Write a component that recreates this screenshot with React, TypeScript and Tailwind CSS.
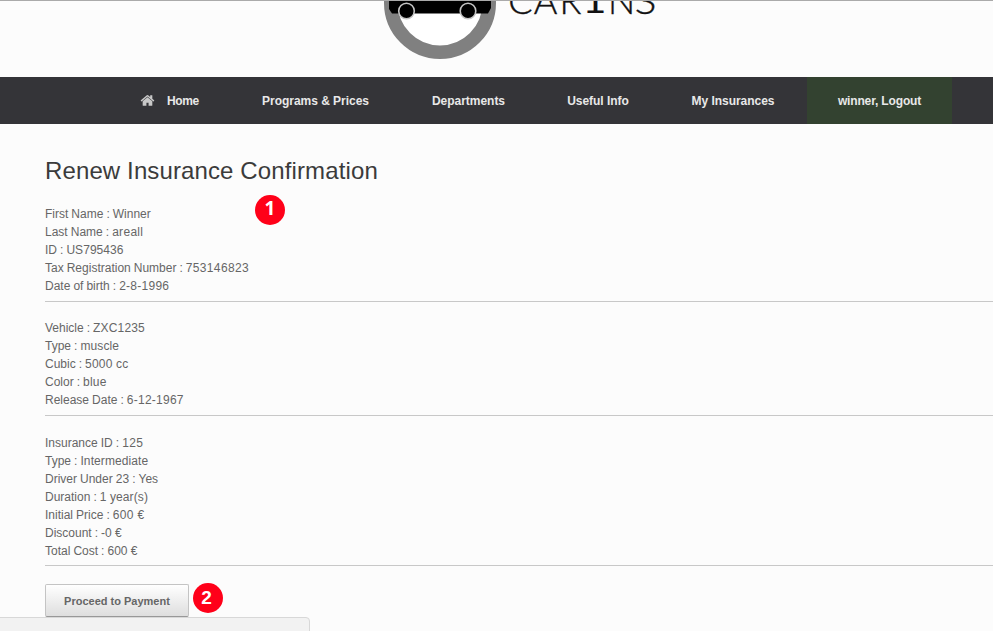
type Row = { label: string; value: string; tracking?: string };

const digits = "tracking-[0.33px]";

const groups: { rows: Row[]; size: string }[] = [
  {
    rows: [
      { label: "First Name", value: "Winner" },
      { label: "Last Name", value: "areall", tracking: "tracking-[0.3px]" },
      { label: "ID", value: "US795436", tracking: "tracking-[0.05px]" },
      { label: "Tax Registration Number", value: "753146823", tracking: digits },
      { label: "Date of birth", value: "2-8-1996", tracking: "tracking-[0.25px]" },
    ],
    size: "h-[97px]",
  },
  {
    rows: [
      { label: "Vehicle", value: "ZXC1235", tracking: "tracking-[0.15px]" },
      { label: "Type", value: "muscle", tracking: "tracking-[0.1px]" },
      { label: "Cubic", value: "5000 cc", tracking: "tracking-[0.2px]" },
      { label: "Color", value: "blue", tracking: "tracking-[0.2px]" },
      { label: "Release Date", value: "6-12-1967", tracking: "tracking-[0.25px]" },
    ],
    size: "h-[97px]",
  },
  {
    rows: [
      { label: "Insurance ID", value: "125", tracking: digits },
      { label: "Type", value: "Intermediate", tracking: "tracking-[0.1px]" },
      { label: "Driver Under 23", value: "Yes" },
      { label: "Duration", value: "1 year(s)", tracking: "tracking-[0.1px]" },
      { label: "Initial Price", value: "600 €", tracking: digits },
      { label: "Discount", value: "-0 €" },
      { label: "Total Cost", value: "600 €" },
    ],
    size: "pt-px h-[133px]",
  },
];

const navItems = [
  { text: "Programs & Prices", width: "w-[171px]" },
  { text: "Departments", width: "w-[135px]" },
  { text: "Useful Info", width: "w-[124px]" },
  { text: "My Insurances", width: "w-[146px]" },
];

function HomeIcon() {
  return (
    <svg viewBox="0 0 1792 1792" className="mr-[12px] size-[15px] shrink-0" fill="#c8c8c8">
      <path d="M1472 992v480q0 26-19 45t-45 19h-384v-384h-256v384h-384q-26 0-45-19t-19-45v-480q0-1 .5-3t.5-3l575-474 575 474q1 2 1 6zm223-69l-62 74q-8 9-21 11h-3q-13 0-21-7l-692-577-692 577q-12 8-24 7-13-2-21-11l-62-74q-8-10-7-23.5t11-21.5l719-599q32-26 76-26t76 26l244 204v-195q0-14 9-23t23-9h192q14 0 23 9t9 23v408l219 182q10 8 11 21.5t-7 23.5z" />
    </svg>
  );
}

function Logo() {
  return (
    <div className="flex h-[76px] overflow-hidden pl-[384px]">
      <svg width="112" height="60" viewBox="384 1 112 60" className="shrink-0">
        <circle cx="440" cy="3" r="49.2" fill="#fff" stroke="#808080" strokeWidth="13.6" />
        <path d="M389 0H491V8L488 13.5H392L389 9Z" fill="#000" />
        <circle cx="406.5" cy="11" r="7.8" fill="#000" stroke="#c4c4c4" strokeWidth="1.6" />
        <circle cx="468" cy="11" r="7.8" fill="#000" stroke="#c4c4c4" strokeWidth="1.6" />
      </svg>
      <div className="-mt-[25px] ml-[12px] flex h-[48px] font-['Lato',sans-serif] text-[36px] font-light leading-[48px] text-[#111] [-webkit-text-stroke:0.4px_#111]">
        <span className="w-[25px] text-center">C</span>
        <span className="w-[25px] text-center">A</span>
        <span className="w-[25px] text-center">R</span>
        <span className="w-[25px] scale-x-[1.25] text-center font-['Liberation_Mono',monospace] text-[32px] leading-[58px] [-webkit-text-stroke:0px]">
          I
        </span>
        <span className="w-[25px] text-center">N</span>
        <span className="w-[25px] scale-x-[1.12] text-center">S</span>
      </div>
    </div>
  );
}

export default function App() {
  return (
    <div className="relative h-[631px] w-[993px] overflow-hidden border-t border-[#aaaaaa] bg-[#fcfcfc] font-['Liberation_Sans',Arial,sans-serif]">
      <Logo />
      <nav className="flex h-[47px] items-stretch bg-[#343438] pl-[109px] text-[12px] font-bold text-[#e8e8e8]">
        <a className="flex w-[121px] items-center pl-[31px] tracking-[-0.4px]">
          <HomeIcon />
          Home
        </a>
        {navItems.map((item) => (
          <a key={item.text} className={`flex items-center justify-center whitespace-nowrap tracking-[-0.03px] ${item.width}`}>
            {item.text}
          </a>
        ))}
        <a className="ml-px flex w-[145px] items-center justify-center bg-[#334230] tracking-[-0.15px]">
          winner, Logout
        </a>
      </nav>
      <main className="pl-[45px] pt-[31px] text-[12px] leading-[18px] text-[#666]">
        <h1 className="h-[50px] text-[24px] leading-[32px] tracking-[0.12px] text-[#3b3b3b]">
          Renew Insurance Confirmation
        </h1>
        {groups.map((group) => (
          <section key={group.rows[0].label} className={`mb-[17px] border-b border-[#c8c8c8] ${group.size}`}>
            {group.rows.map((row) => (
              <p key={row.label} className="whitespace-nowrap">
                <span className="[word-spacing:-0.3px]">{row.label} : </span>
                <span className={row.tracking}>{row.value}</span>
              </p>
            ))}
          </section>
        ))}
        <button className="mt-px h-[33px] w-[144px] rounded-[2px] border border-[#c4c4c4] border-b-[#989898] bg-linear-to-b from-white to-[#dedede] text-[11px] font-bold text-[#666]">
          Proceed to Payment
        </button>
      </main>
      <span className="absolute left-[255px] top-[194px] flex size-[30px] items-center justify-center rounded-full bg-[#ff0019] pb-[3px] font-['Open_Sans',sans-serif] text-[19px] font-bold text-white">
        1
      </span>
      <span className="absolute left-[193px] top-[582px] flex size-[30px] items-center justify-center rounded-full bg-[#ff0019] pr-[3px] text-[19px] font-bold text-white">
        2
      </span>
      <div className="absolute -left-px top-[616px] h-[20px] w-[311px] rounded-tr-[4px] border border-[#d8d8d8] bg-[#f2f2f2]" />
    </div>
  );
}
